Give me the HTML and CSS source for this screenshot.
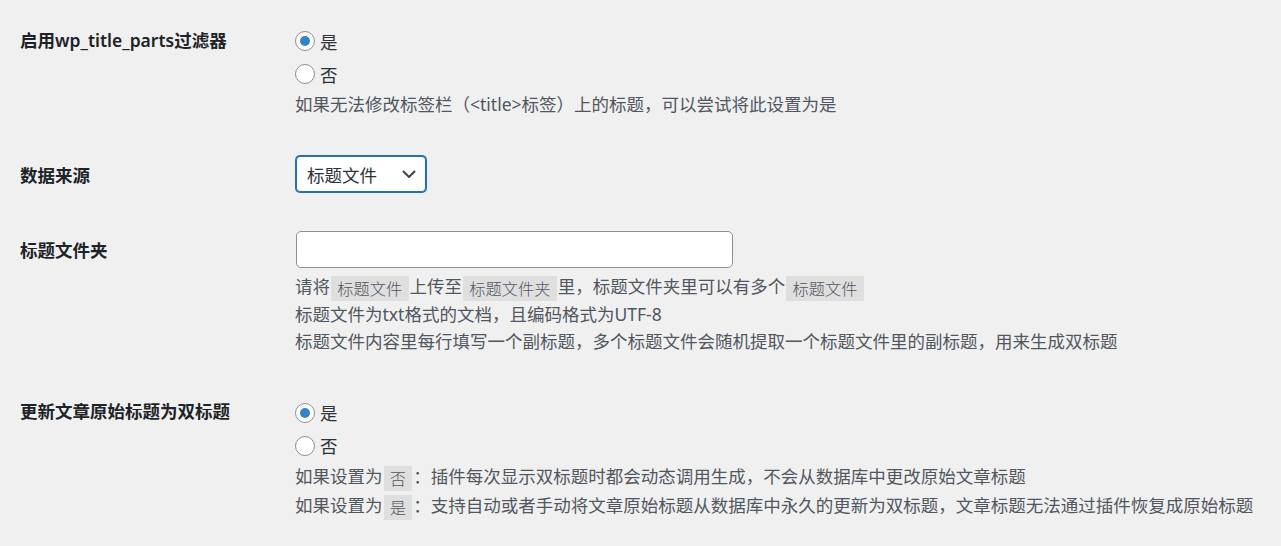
FILE: index.html
```html
<!DOCTYPE html>
<html lang="zh-CN">
<head>
    <meta charset="UTF-8">
    <meta name="viewport" content="width=device-width, initial-scale=1.0">
    <title>双标题设置</title>
    <link rel="stylesheet" href="styles.css">
</head>
<body>

    <div class="settings">

        <div class="form-row row-radio">
            <div class="form-label">启用wp_title_parts过滤器</div>
            <div class="form-field">
                <label class="option"><input type="radio" name="filter" checked>是</label>
                <label class="option"><input type="radio" name="filter">否</label>
                <p class="description">如果无法修改标签栏（&lt;title&gt;标签）上的标题，可以尝试将此设置为是</p>
            </div>
        </div>

        <div class="form-row">
            <div class="form-label">数据来源</div>
            <div class="form-field">
                <div class="select-box">
                    <span>标题文件</span>
                    <svg width="14" height="8" viewBox="0 0 14 8"><path d="M1 1 L7 7 L13 1" fill="none" stroke="#3c434a" stroke-width="2"/></svg>
                </div>
            </div>
        </div>

        <div class="form-row">
            <div class="form-label">标题文件夹</div>
            <div class="form-field">
                <input type="text" class="text-input">
                <p class="description spaced">
                    <span class="line">请将<code>标题文件</code>上传至<code>标题文件夹</code>里，标题文件夹里可以有多个<code>标题文件</code></span>
                    <span class="line">标题文件为txt格式的文档，且编码格式为UTF-8</span>
                    <span class="line">标题文件内容里每行填写一个副标题，多个标题文件会随机提取一个标题文件里的副标题，用来生成双标题</span>
                </p>
            </div>
        </div>

        <div class="form-row row-radio">
            <div class="form-label">更新文章原始标题为双标题</div>
            <div class="form-field">
                <label class="option"><input type="radio" name="update" checked>是</label>
                <label class="option"><input type="radio" name="update">否</label>
                <p class="description tall">
                    <span class="line">如果设置为<code>否</code>：插件每次显示双标题时都会动态调用生成，不会从数据库中更改原始文章标题</span>
                    <span class="line">如果设置为<code>是</code>：支持自动或者手动将文章原始标题从数据库中永久的更新为双标题，文章标题无法通过插件恢复成原始标题</span>
                </p>
            </div>
        </div>

    </div>

</body>
</html>
```

FILE: styles.css
```css
body {
    margin: 0;
    padding: 0;
    background-color: #f0f0f1;
    color: #2c3338;
    font-family: "Noto Sans", "Noto Sans CJK SC", sans-serif;
    font-size: 17.5px;
}

.settings {
    padding: 6px 0 0 20px;
}

.form-row {
    display: flex;
}

.form-label {
    width: 275px;
    flex-shrink: 0;
    padding-top: 27px;
    line-height: 22.75px;
    font-weight: 600;
    color: #1d2327;
}

.row-radio .form-label {
    padding-top: 23px;
}

.form-field {
    padding: 18.75px 0;
}

.option {
    display: flex;
    align-items: center;
    height: 33px;
    color: #2c3338;
}

.option input[type="radio"] {
    appearance: none;
    -webkit-appearance: none;
    width: 20px;
    height: 20px;
    margin: 0 5px 0 0;
    border: 1px solid #8c8f94;
    border-radius: 50%;
    background-color: #fff;
    box-sizing: border-box;
    display: flex;
    align-items: center;
    justify-content: center;
}

.option input[type="radio"]:checked::before {
    content: "";
    width: 10px;
    height: 10px;
    border-radius: 50%;
    background-color: #3582c4;
}

.description {
    margin: 0;
    line-height: 27px;
    color: #50575e;
}

.description.spaced {
    margin: 5px 0 4px;
}

.description.tall {
    line-height: 29px;
}

.line {
    display: block;
}

code {
    display: inline-block;
    margin: 0 1px;
    padding: 3.5px 6.25px 2.5px;
    line-height: 19px;
    font-family: "Noto Sans CJK SC", sans-serif;
    font-size: 16.25px;
    font-weight: 300;
    vertical-align: middle;
    background-color: rgba(0, 0, 0, 0.07);
    color: #50575e;
}

.select-box {
    display: flex;
    align-items: center;
    justify-content: space-between;
    box-sizing: border-box;
    width: 130px;
    height: 36px;
    margin: 1px;
    padding: 0 9px 0 10px;
    border: 1px solid #2271b1;
    border-radius: 4px;
    box-shadow: 0 0 0 1px #2271b1;
    background-color: #fff;
    color: #2c3338;
}

.text-input {
    display: block;
    box-sizing: border-box;
    width: 437px;
    height: 37px;
    margin: 0 0 0 1px;
    border: 1px solid #8c8f94;
    border-radius: 5px;
    background-color: #fff;
}
```
